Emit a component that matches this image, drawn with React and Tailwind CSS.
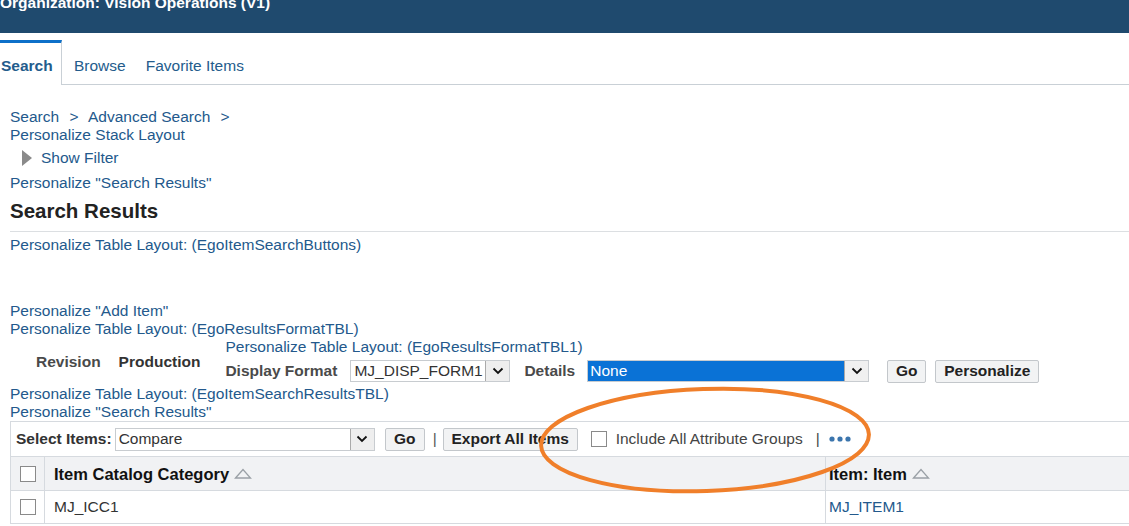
import React from "react";

const link = "text-[#23598c]";

function Chevron() {
  return (
    <svg width="12" height="8" viewBox="0 0 12 8">
      <path d="M1.5 1.5 L6 6 L10.5 1.5" fill="none" stroke="#111" strokeWidth="1.8" />
    </svg>
  );
}

function SortUp() {
  return (
    <svg width="18" height="11" viewBox="0 0 18 11" className="ml-[5px]">
      <path d="M1.5 10 L9 1.5 L16.5 10 Z" fill="none" stroke="#9aa0a6" strokeWidth="1.3" />
    </svg>
  );
}

function Check() {
  return <span className="inline-block h-[16px] w-[16px] border border-[#8a8a8a] bg-white" />;
}

function Btn({ children, w }) {
  return (
    <button
      className={`flex h-[23px] ${w} items-center justify-center rounded-[2px] border border-[#c3c7cb] bg-[#f2f3f4] text-[15.5px] font-bold text-[#222]`}
    >
      {children}
    </button>
  );
}

export default function App() {
  return (
    <div
      className="relative h-[526px] w-[1129px] overflow-hidden bg-white text-[15.5px] leading-[18px]"
      style={{ fontFamily: '"Liberation Sans", Arial, sans-serif' }}
    >
      {/* Top bar */}
      <header className="h-[33px] overflow-hidden bg-[#1f4a6e]">
        <div className="mt-[-5px] text-[15.5px] font-bold leading-[16px] text-white">
          Organization: Vision Operations (V1)
        </div>
      </header>

      {/* Tabs */}
      <div className="mt-[7px] flex h-[45px]">
        <div className="h-[45px] w-[62px] border-t-[3px] border-r border-t-[#0d70c9] border-r-[#c9d0d6] pl-[1px] pt-[14px] font-bold text-[#245c8c]">
          Search
        </div>
        <div className="flex h-[45px] flex-1 gap-[20px] border-b border-[#c9d0d6] pl-[12px] pt-[17px] text-[#245c8c]">
          <span>Browse</span>
          <span>Favorite Items</span>
        </div>
      </div>

      <div className="pl-[10px]">
        <div className={`mt-[23px] ${link}`}>
          Search <span className="mx-[6px]">&gt;</span> Advanced Search <span className="ml-[6px]">&gt;</span>
        </div>
        <div className={link}>Personalize Stack Layout</div>
        <div className="mt-[5px] flex items-center pl-[12px]">
          <svg width="10" height="16" viewBox="0 0 10 16">
            <path d="M0 0 L10 8 L0 16 Z" fill="#8a8a8a" />
          </svg>
          <span className={`ml-[9px] ${link}`}>Show Filter</span>
        </div>
        <div className={`mt-[7px] ${link}`}>Personalize "Search Results"</div>
        <h2 className="mt-[7px] text-[20.5px] font-bold leading-[24px] text-[#222]">Search Results</h2>
        <div className="mt-[8px] border-t border-[#dcdfe2]" />
        <div className={`mt-[4px] ${link}`}>Personalize Table Layout: (EgoItemSearchButtons)</div>

        <div className={`mt-[48px] ${link}`}>Personalize "Add Item"</div>
        <div className={link}>Personalize Table Layout: (EgoResultsFormatTBL)</div>

        <div className="flex items-center">
          <div className="flex pt-[4px]">
            <span className="ml-[26px] font-bold text-[#4a4a4a]">Revision</span>
            <span className="ml-[18px] font-bold text-[#333]">Production</span>
          </div>
          <div className="ml-[25px]">
            <div className={link}>Personalize Table Layout: (EgoResultsFormatTBL1)</div>
            <div className="mt-[4px] flex h-[22px] items-center">
              <span className="font-bold text-[#4a4a4a]">Display Format</span>
              <div className="ml-[13px] flex h-[22px] w-[160px] items-center border border-[#c8ccd0] bg-white">
                <span className="flex-1 pl-[3px] text-[#333]">MJ_DISP_FORM1</span>
                <span className="flex h-[20px] w-[24px] items-center justify-center border-l border-[#aaa] bg-[#eeeeee]">
                  <Chevron />
                </span>
              </div>
              <span className="ml-[14px] font-bold text-[#4a4a4a]">Details</span>
              <div className="ml-[12px] flex h-[22px] w-[282px] items-center border border-[#c8ccd0] bg-white">
                <span className="h-[20px] flex-1 bg-[#0a72d6] pl-[2px] leading-[20px] text-white">None</span>
                <span className="flex h-[20px] w-[24px] items-center justify-center border-l border-[#aaa] bg-[#f0f0f0]">
                  <Chevron />
                </span>
              </div>
              <div className="ml-[18px]">
                <Btn w="w-[39px]">Go</Btn>
              </div>
              <div className="ml-[9px]">
                <Btn w="w-[104px]">Personalize</Btn>
              </div>
            </div>
          </div>
        </div>

        <div className={`mt-[3px] ${link}`}>Personalize Table Layout: (EgoItemSearchResultsTBL)</div>
        <div className={link}>Personalize "Search Results"</div>

        {/* Results table */}
        <div className="border-t border-l border-[#d6dadf]">
          <div className="flex h-[34px] items-center pl-[5px]">
            <span className="font-bold text-[#333]">Select Items:</span>
            <div className="ml-[3px] flex h-[23px] w-[260px] items-center border border-[#c8ccd0] bg-white">
              <span className="flex-1 pl-[3px] text-[#333]">Compare</span>
              <span className="flex h-[21px] w-[24px] items-center justify-center border-l border-[#aaa] bg-[#eeeeee]">
                <Chevron />
              </span>
            </div>
            <div className="ml-[10px]">
              <Btn w="w-[40px]">Go</Btn>
            </div>
            <span className="ml-[8px] text-[#555]">|</span>
            <div className="ml-[6px]">
              <Btn w="w-[135px]">Export All Items</Btn>
            </div>
            <span className="ml-[13px] flex">
              <Check />
            </span>
            <span className="ml-[9px] text-[#444]">Include All Attribute Groups</span>
            <span className="ml-[13px] text-[#444]">|</span>
            <svg width="22" height="6" viewBox="0 0 22 6" className="ml-[9px]">
              <circle cx="3" cy="3" r="2.6" fill="#3b75ad" />
              <circle cx="11" cy="3" r="2.6" fill="#3b75ad" />
              <circle cx="19" cy="3" r="2.6" fill="#3b75ad" />
            </svg>
          </div>
          <div className="flex h-[34px] border-t border-[#d6dadf] bg-[#f1f2f4]">
            <div className="flex w-[34px] items-center justify-center border-r border-[#d6dadf]">
              <Check />
            </div>
            <div className="flex w-[781px] items-center border-r border-[#d6dadf] pl-[9px] text-[16.5px] font-bold text-[#111]">
              Item Catalog Category
              <SortUp />
            </div>
            <div className="flex flex-1 items-center pl-[3px] text-[16.5px] font-bold text-[#111]">
              Item: Item
              <SortUp />
            </div>
          </div>
          <div className="flex h-[34px] border-t border-b border-[#d6dadf] bg-white">
            <div className="flex w-[34px] items-center justify-center border-r border-[#d6dadf]">
              <Check />
            </div>
            <div className="flex w-[781px] items-center border-r border-[#d6dadf] pl-[9px] text-[#333]">
              MJ_ICC1
            </div>
            <div className={`flex flex-1 items-center pl-[3px] ${link}`}>MJ_ITEM1</div>
          </div>
        </div>
      </div>

      {/* Hand-drawn annotation */}
      <svg className="pointer-events-none absolute left-0 top-0" width="1129" height="526">
        <ellipse
          cx="705"
          cy="440"
          rx="164"
          ry="51"
          transform="rotate(-2 705 440)"
          fill="none"
          stroke="#f07f2a"
          strokeWidth="4"
        />
      </svg>
    </div>
  );
}
